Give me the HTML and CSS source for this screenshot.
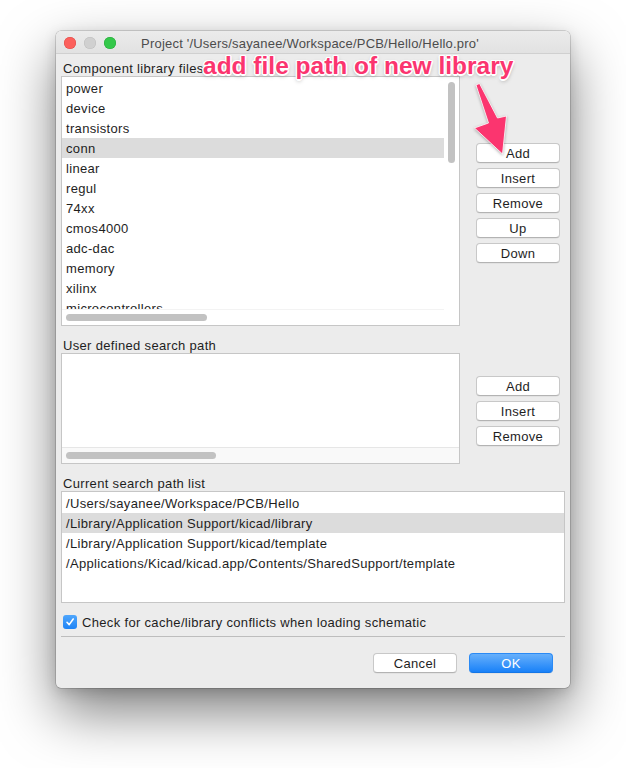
FILE: index.html
```html
<!DOCTYPE html>
<html>
<head>
<meta charset="utf-8">
<link rel="stylesheet" href="styles.css">
</head>
<body>
<div class="window">
  <div class="titlebar">
    <div class="lights">
      <span class="light red"></span>
      <span class="light gray"></span>
      <span class="light green"></span>
    </div>
    <div class="title">Project '/Users/sayanee/Workspace/PCB/Hello/Hello.pro'</div>
  </div>

  <div class="content">
    <div class="label">Component library files</div>
    <div class="row">
      <div class="listbox list-libs">
        <div class="viewport">
          <div class="item">power</div>
          <div class="item">device</div>
          <div class="item">transistors</div>
          <div class="item selected">conn</div>
          <div class="item">linear</div>
          <div class="item">regul</div>
          <div class="item">74xx</div>
          <div class="item">cmos4000</div>
          <div class="item">adc-dac</div>
          <div class="item">memory</div>
          <div class="item">xilinx</div>
          <div class="item">microcontrollers</div>
        </div>
        <div class="vscroll"><div class="vthumb"></div></div>
        <div class="hscroll plain"><div class="hthumb thumb-libs"></div></div>
        <div class="corner"></div>
      </div>
      <div class="btncol btncol-libs">
        <button class="btn">Add</button>
        <button class="btn">Insert</button>
        <button class="btn">Remove</button>
        <button class="btn">Up</button>
        <button class="btn">Down</button>
      </div>
    </div>

    <div class="label gap">User defined search path</div>
    <div class="row">
      <div class="listbox list-user">
        <div class="viewport"></div>
        <div class="hscroll track"><div class="hthumb thumb-user"></div></div>
      </div>
      <div class="btncol btncol-user">
        <button class="btn">Add</button>
        <button class="btn">Insert</button>
        <button class="btn">Remove</button>
      </div>
    </div>

    <div class="label gap">Current search path list</div>
    <div class="listbox list-paths">
      <div class="item">/Users/sayanee/Workspace/PCB/Hello</div>
      <div class="item selected">/Library/Application Support/kicad/library</div>
      <div class="item">/Library/Application Support/kicad/template</div>
      <div class="item">/Applications/Kicad/kicad.app/Contents/SharedSupport/template</div>
    </div>

    <label class="check">
      <span class="checkbox">
        <svg width="10" height="10" viewBox="0 0 10 10"><path d="M2 5.3 L4.2 7.6 L8.2 2" fill="none" stroke="#fff" stroke-width="1.6" stroke-linecap="round" stroke-linejoin="round"/></svg>
      </span>
      <span>Check for cache/library conflicts when loading schematic</span>
    </label>

    <div class="separator"></div>

    <div class="actions">
      <button class="btn">Cancel</button>
      <button class="btn primary">OK</button>
    </div>
  </div>

  <div class="annotation">add file path of new library</div>
  <svg class="arrow" width="60" height="80" viewBox="466 81 60 80">
    <polygon points="476,85 479.5,83.5 497.5,118 506.5,116 502.5,154 474.5,128 488.5,123" fill="#fb356f" stroke="#fff" stroke-width="0.8" stroke-linejoin="round"/>
  </svg>
</div>
</body>
</html>
```

FILE: styles.css
```css
* { box-sizing: border-box; }

html, body {
  margin: 0;
  padding: 0;
  background: #ffffff;
}

body {
  font-family: "Liberation Sans", Arial, sans-serif;
  font-size: 13px;
  letter-spacing: 0.33px;
  color: #1e1e1e;
  padding: 31px 0 0 56px;
  min-height: 768px;
}

.window {
  position: relative;
  width: 514px;
  height: 657px;
  background: #ececec;
  border-radius: 5px;
  box-shadow: 0 0 0 0.5px rgba(0,0,0,0.28), 0 24px 55px rgba(0,0,0,0.5), 0 4px 14px rgba(0,0,0,0.15);
}

.titlebar {
  position: relative;
  height: 23px;
  border-bottom: 1px solid #d0d0d0;
  background: linear-gradient(#ebebeb, #e2e2e2);
  border-radius: 5px 5px 0 0;
  display: flex;
  align-items: center;
  justify-content: center;
}

.lights {
  position: absolute;
  left: 8px;
  top: 6px;
  display: flex;
  gap: 8px;
}

.light {
  width: 12px;
  height: 12px;
  border-radius: 50%;
  display: block;
}
.light.red { background: #fc605c; box-shadow: inset 0 0 0 0.5px #de4a45; }
.light.gray { background: #d0d0d0; box-shadow: inset 0 0 0 0.5px #bdbdbd; }
.light.green { background: #34c84a; box-shadow: inset 0 0 0 0.5px #25a838; }

.title {
  color: #4c4c4c;
  line-height: 22px;
  padding-top: 3px;
  letter-spacing: 0.2px;
  margin-left: -6px;
}

.content {
  padding: 6px 5px 0 5px;
}

.label {
  height: 16px;
  line-height: 18px;
  padding-left: 2px;
}
.label.gap { margin-top: 11px; }

.row {
  display: flex;
}

.listbox {
  background: #fff;
  border: 1px solid #c6c6c6;
}

.item {
  height: 20px;
  line-height: 22px;
  padding-left: 4px;
  white-space: nowrap;
}
.item.selected { background: #dcdcdc; }

.list-libs {
  width: 399px;
  height: 250px;
  display: grid;
  grid-template-columns: 1fr 15px;
  grid-template-rows: 232px 16px;
}
.list-libs .viewport {
  overflow: hidden;
  padding-top: 1px;
}

.vscroll {
  position: relative;
  padding: 5px 0 0 4px;
}
.vthumb {
  width: 7px;
  height: 81px;
  border-radius: 4px;
  background: #c2c2c2;
}

.hscroll {
  padding: 4px 0 0 4px;
}
.hscroll.plain {
  border-top: 1px solid #f3f3f3;
}
.hscroll.track {
  height: 16px;
  background: #f9f9f9;
  border-top: 1px solid #e6e6e6;
}
.hthumb {
  height: 7px;
  border-radius: 4px;
  background: #c2c2c2;
}
.thumb-libs { width: 141px; }
.thumb-user { width: 150px; }

.list-user {
  width: 399px;
  height: 111px;
  display: flex;
  flex-direction: column;
}
.list-user .viewport { flex: 1; }

.btncol {
  margin-left: 16px;
  width: 84px;
  display: flex;
  flex-direction: column;
  gap: 5px;
}
.btncol-libs { margin-top: 67px; }
.btncol-user { margin-top: 23px; }

.btn {
  font-family: inherit;
  font-size: 13px;
  letter-spacing: 0.33px;
  color: #1e1e1e;
  width: 84px;
  height: 20px;
  padding: 1px 0 0 0;
  margin: 0;
  background: #ffffff;
  border: 1px solid #c8c8c8;
  border-bottom-color: #b3b3b3;
  border-radius: 4px;
  box-shadow: 0 0.5px 0.5px rgba(0,0,0,0.08);
  line-height: 18px;
  text-align: center;
}

.list-paths {
  width: 504px;
  height: 112px;
  padding-top: 1px;
}

.check {
  margin-top: 11px;
  height: 16px;
  display: flex;
  align-items: center;
  gap: 5px;
  padding-left: 2px;
}
.checkbox {
  width: 14px;
  height: 14px;
  border-radius: 3px;
  background: linear-gradient(#4fa6fc, #1f84f6);
  display: flex;
  align-items: center;
  justify-content: center;
}
.checkbox svg { display: block; }

.separator {
  margin-top: 6px;
  height: 1px;
  background: #bdbdbd;
}

.actions {
  margin-top: 16px;
  display: flex;
  justify-content: flex-end;
  gap: 12px;
  padding-right: 12px;
}

.btn.primary {
  color: #ffffff;
  border: 1px solid #2a8af5;
  border-bottom-color: #1476e6;
  background: linear-gradient(#67b0fb, #1981f8);
}

.annotation {
  position: absolute;
  left: 147px;
  top: 23px;
  font-family: "Liberation Sans", Arial, sans-serif;
  font-weight: bold;
  font-size: 24.5px;
  line-height: 24px;
  letter-spacing: 0;
  color: #fb356f;
  white-space: nowrap;
  text-shadow: 1px 1px 0 #fff, -1px -1px 0 #fff, 1px -1px 0 #fff, -1px 1px 0 #fff, 0 1.5px 0 #fff, 0 -1.5px 0 #fff, 1.5px 0 0 #fff, -1.5px 0 0 #fff, 0 2px 4px rgba(0,0,0,0.35);
}

.arrow {
  position: absolute;
  left: 410px;
  top: 50px;
  overflow: visible;
  filter: drop-shadow(0 1px 1.5px rgba(0,0,0,0.3));
}
```
